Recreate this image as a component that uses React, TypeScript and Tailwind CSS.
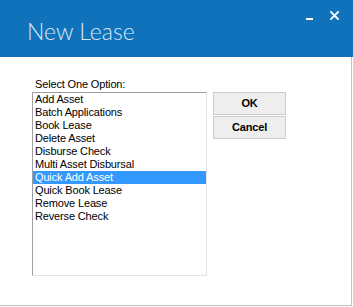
const options = [
  'Add Asset',
  'Batch Applications',
  'Book Lease',
  'Delete Asset',
  'Disburse Check',
  'Multi Asset Disbursal',
  'Quick Add Asset',
  'Quick Book Lease',
  'Remove Lease',
  'Reverse Check',
]

const selected = 'Quick Add Asset'

function WindowButtons() {
  return (
    <div className="flex items-start pr-[14px] pt-[11px]">
      <span className="mt-[7px] block h-[2px] w-[7px] bg-white" />
      <svg className="ml-[17px]" width="9" height="9" viewBox="0 0 9 9">
        <path d="M1 1 L8 8 M8 1 L1 8" stroke="white" strokeWidth="1.8" strokeLinecap="square" />
      </svg>
    </div>
  )
}

export default function App() {
  return (
    <div className="h-[307px] w-[353px] bg-white font-['Liberation_Sans',Arial,sans-serif] text-[11px] leading-[13px] tracking-[-0.15px] text-black">
      <div className="flex h-[57px] justify-between bg-[#1072bb]">
        <h1 className="pl-[27px] pt-[15px] font-['Lato',sans-serif] text-[23px] font-light leading-[32px] tracking-normal text-[#d6e8f6]">
          New Lease
        </h1>
        <WindowButtons />
      </div>

      <div className="h-[249px] w-[352px] border-b border-r border-[#c4c4c4] pl-[32px] pt-[21px]">
        <p className="pl-[3px]">Select One Option:</p>
        <div className="mt-px flex gap-[6px]">
          <ul className="h-[184px] w-[175px] border border-b-[#e3e3e3] border-l-[#a0a0a0] border-r-[#e3e3e3] border-t-[#a0a0a0] bg-white">
            {options.map((option) => (
              <li
                key={option}
                className={
                  option === selected
                    ? 'h-[13px] bg-[#3399ff] pl-[2px] text-white'
                    : 'h-[13px] pl-[2px]'
                }
              >
                {option}
              </li>
            ))}
          </ul>
          <div className="flex flex-col gap-[1px]">
            <button
              type="button"
              className="h-[23px] w-[73px] border border-[#cccccc] bg-[#eeeeee] text-[11px] font-bold"
            >
              OK
            </button>
            <button
              type="button"
              className="h-[23px] w-[73px] border border-[#cccccc] bg-[#eeeeee] text-[11px] font-bold"
            >
              Cancel
            </button>
          </div>
        </div>
      </div>
    </div>
  )
}
